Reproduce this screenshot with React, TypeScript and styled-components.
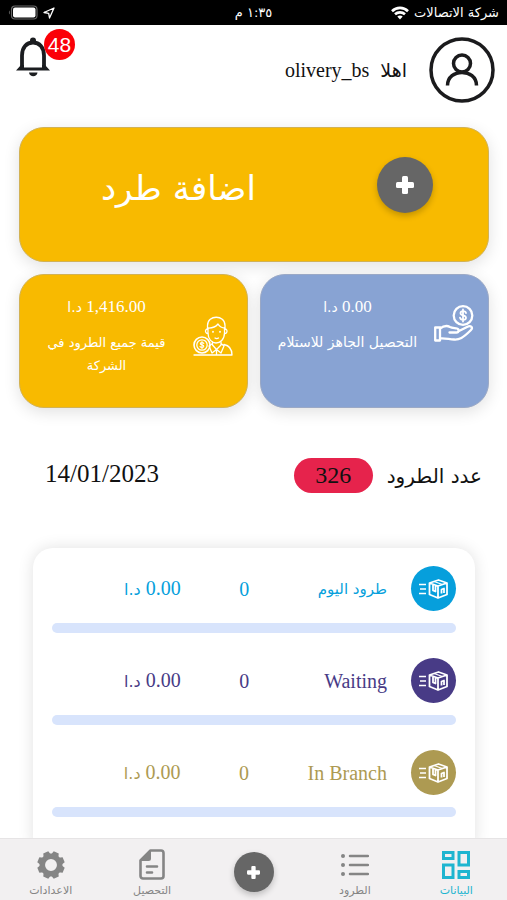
import React from "react";
import styled, { createGlobalStyle } from "styled-components";

const latin = `"Liberation Serif", "DejaVu Sans", serif`;
const arabic = `"DejaVu Sans", "Liberation Sans", sans-serif`;

const GlobalStyle = createGlobalStyle`
  *, *::before, *::after { box-sizing: border-box; }
  body { margin: 0; background: #fff; color: #111; font-family: ${latin}; }
  button { border: 0; padding: 0; background: none; color: inherit; font: inherit; cursor: pointer; }
  a { color: inherit; text-decoration: none; }
  h1, h2, p, ul { margin: 0; padding: 0; font-weight: 400; list-style: none; }
`;

const Screen = styled.div`
  display: flex;
  flex-direction: column;
  height: 100vh;
  overflow: hidden;
`;

const StatusBar = styled.div`
  display: grid;
  grid-template-columns: 1fr auto 1fr;
  align-items: center;
  flex: none;
  height: 25px;
  padding: 0 8px;
  background: #000;
  color: #fff;
  font: 13px/24px ${arabic};
`;

const StatusGroup = styled.div<{ $end?: boolean }>`
  display: flex;
  align-items: center;
  justify-content: ${(p) => (p.$end ? "flex-end" : "flex-start")};
  gap: 5px;
  white-space: nowrap;
`;

const Content = styled.main`
  flex: 1;
  min-height: 0;
  overflow-y: auto;
  scrollbar-width: none;
`;

const Header = styled.header`
  display: flex;
  align-items: flex-start;
  justify-content: space-between;
  height: 102px;
  padding: 12px 12px 0 16px;
`;

const Profile = styled.div`
  display: flex;
  align-items: center;
  gap: 22px;
`;

const Greeting = styled.p`
  display: flex;
  align-items: baseline;
  gap: 11px;
  font-size: 20px;
  line-height: 24px;
`;

const ArabicText = styled.span<{ $size: number }>`
  font-family: ${arabic};
  font-size: ${(p) => p.$size}px;
`;

const BellButton = styled.button`
  position: relative;
  width: 34px;
  height: 40px;
`;

const Badge = styled.span`
  position: absolute;
  top: -8px;
  left: 28px;
  width: 31px;
  height: 31px;
  border-radius: 50%;
  background: #fb0007;
  color: #fff;
  font: 21px/31px "Liberation Sans", sans-serif;
  text-align: center;
`;

const Panel = styled.section`
  border-radius: 25px;
  background: #f8ba00;
  color: #fff;
  border: 1px solid #d2b254;
  box-shadow: 0 4px 16px rgba(0, 0, 0, 0.12);
`;

const Hero = styled(Panel)`
  display: grid;
  grid-template-columns: 6fr 11fr;
  align-items: center;
  justify-items: center;
  height: 135px;
  margin: 0 18px 12px 19px;
  padding-bottom: 20px;
`;

const HeroTitle = styled.h1`
  padding: 6px 0 0 14px;
  font: 34px/48px ${arabic};
  white-space: nowrap;
`;

const RoundButton = styled.button<{ $size: number }>`
  display: grid;
  place-items: center;
  width: ${(p) => p.$size}px;
  height: ${(p) => p.$size}px;
  border-radius: 50%;
  background: #666;
  color: #fff;
  box-shadow: 0 3px 6px rgba(0, 0, 0, 0.22);
`;

const Cards = styled.div`
  display: grid;
  grid-template-columns: 1fr 1fr;
  gap: 12px;
  margin: 0 18px 0 19px;
`;

const Card = styled(Panel)<{ $blue?: boolean }>`
  height: 134px;
  padding: 20px 14px 0 0;
  ${(p) => p.$blue && "background: #88a3d3; border-color: #9ba9c6;"}
`;

const CardBody = styled.div`
  display: grid;
  grid-template-columns: 40px 1fr;
  align-items: center;
`;

const CardText = styled.div`
  display: flex;
  flex-direction: column;
  align-items: center;
  gap: 12px;
`;

const Amount = styled.p<{ $size: number }>`
  font-size: ${(p) => p.$size}px;
  line-height: 24px;
  white-space: nowrap;
`;

const CardLabel = styled.p<{ $size: number }>`
  max-width: 144px;
  font: ${(p) => p.$size}px/23px ${arabic};
  text-align: center;
`;

const Summary = styled.div`
  display: flex;
  align-items: center;
  gap: 14px;
  margin: 50px 25px 55px 45px;
`;

const SummaryTitle = styled.h2`
  font: 20px/32px ${arabic};
`;

const CountPill = styled.span`
  width: 79px;
  border-radius: 18px;
  background: #e6234c;
  font-size: 24px;
  line-height: 35px;
  text-align: center;
`;

const DateText = styled.time`
  margin-inline-start: auto;
  padding-bottom: 4px;
  font-size: 25px;
  line-height: 31px;
`;

const StatusList = styled.ul`
  display: flex;
  flex-direction: column;
  gap: 25px;
  margin: 0 32px 0 33px;
  padding: 18px 19px 40px;
  border-radius: 20px;
  background: #fff;
  box-shadow: 0 0 16px rgba(0, 0, 0, 0.12);
`;

const StatusItem = styled.li<{ $color: string }>`
  display: grid;
  grid-template-columns: 45px 8fr 8fr 13fr;
  align-items: center;
  column-gap: 24px;
  row-gap: 12px;
  color: ${(p) => p.$color};
  font-size: 20px;
  line-height: 24px;
  white-space: nowrap;
`;

const StatusIcon = styled.span<{ $color: string }>`
  display: grid;
  place-items: center;
  width: 45px;
  height: 45px;
  border-radius: 50%;
  background: ${(p) => p.$color};
  color: #fff;
`;

const StatusCount = styled.span`
  text-align: center;
`;

const Track = styled.div`
  grid-column: 1 / -1;
  height: 10px;
  border-radius: 5px;
  background: #d8e4fc;
`;

const TabBar = styled.nav`
  display: grid;
  grid-template-columns: repeat(5, 1fr);
  flex: none;
  height: 62px;
  border-top: 1px solid #e6e4e5;
  background: #f2f0f1;
`;

const Tab = styled.a<{ $active?: boolean }>`
  display: grid;
  grid-template-rows: 31px 16px;
  justify-items: center;
  align-items: center;
  align-content: start;
  gap: 3px;
  padding-top: 10px;
  color: ${(p) => (p.$active ? "#1fb5d0" : "#858585")};
  font: 11px/16px ${arabic};
`;

const TabAction = styled.div`
  display: flex;
  justify-content: center;
  padding-top: 13px;
`;

const PlusIcon = ({ size }: { size: number }) => (
  <svg width={size} height={size} viewBox="0 0 18 18" fill="currentColor" aria-hidden="true">
    <rect x="6" width="6" height="18" rx="1.5" />
    <rect y="6" width="18" height="6" rx="1.5" />
  </svg>
);

const WifiIcon = () => (
  <svg width="18" height="14" viewBox="0 0 18 14" fill="none" stroke="#fff" strokeWidth="2.6" aria-hidden="true">
    <path d="M1 5.2C5.5.8 12.500.8 17 5.200M4 8.300c2.800-2.600 7.200-2.600 10 0" />
    <path d="M6.300 10.600c1.500-1.400 3.900-1.400 5.400 0L9 13.500z" fill="#fff" stroke="none" />
  </svg>
);

const LocationIcon = () => (
  <svg width="12" height="12" viewBox="0 0 12 12" fill="none" stroke="#fff" strokeWidth="1.300" strokeLinejoin="round" aria-hidden="true">
    <path d="M11 1 1 5.500l4.700.8.800 4.700z" />
  </svg>
);

const BatteryIcon = () => (
  <svg width="30" height="15" viewBox="0 0 30 15" aria-hidden="true">
    <rect x="3.500" y="1" width="25.500" height="13" rx="3.500" fill="none" stroke="#686868" strokeWidth="1.200" />
    <rect x="5" y="2.500" width="22.500" height="10" rx="2" fill="#fff" />
    <path d="M1.800 5.500v4C.6 9 .6 6 1.800 5.500z" fill="#686868" />
  </svg>
);

const UserIcon = () => (
  <svg width="66" height="66" viewBox="0 0 66 66" fill="none" stroke="#1b1b1d" strokeWidth="3.500" aria-hidden="true">
    <circle cx="33" cy="33" r="31" />
    <circle cx="33" cy="26.500" r="8.500" />
    <path d="M18.500 48.500c0-17.500 29-17.500 29 0" strokeLinecap="butt" />
  </svg>
);

const BellIcon = () => (
  <svg width="34" height="40" viewBox="0 0 34 40" aria-hidden="true">
    <path d="M6 32V18.500C6 10.500 10.500 5.500 17 5.500S28 10.500 28 18.500V32" fill="none" stroke="#1b1d20" strokeWidth="3.800" />
    <circle cx="17" cy="3.500" r="3" fill="#1b1d20" />
    <path d="M0 33.500 5 28h3v2.500h18V28h3l5 5.500z" fill="#1b1d20" />
    <path d="M13 35.500h8.500c-.5 5-8 5-8.500 0z" fill="#1b1d20" />
  </svg>
);

const HandCoinIcon = () => (
  <svg width="40" height="40" viewBox="0 0 40 40" fill="none" stroke="#fff" strokeWidth="2.300" strokeLinejoin="round" strokeLinecap="round" aria-hidden="true">
    <circle cx="29" cy="10.500" r="9.300" />
    <path d="M32 8c-.5-2.500-5.500-2.500-5.500.3 0 2.700 5.500 1.500 5.500 4.400 0 2.800-5.500 2.800-6 0M29 4.500v12" strokeWidth="1.800" />
    <path d="M1.200 22.500H6v13H1.200zM6 23.500c4-3 7-3.200 10-1.500 2 1 5 1 7 1.500 2.500.8 2 4-.5 4h-7M24 26.500l9-4.500c4-2 6.500.5 4 3-8 8-12 10-17 9.500-5-.2-9-1.500-14-1" />
  </svg>
);

const CourierIcon = () => (
  <svg width="40" height="40" viewBox="0 0 40 40" fill="none" stroke="#fff" strokeWidth="1.300" strokeLinejoin="round" strokeLinecap="round" aria-hidden="true">
    <path d="M14.500 13V9.500C14.500-1.500 32-1.500 32 9.500V13M14.500 12c4.500.3 8.500-1.500 10.500-4 1.500 2.500 4 4 7 4" />
    <path d="M15 12v5c0 6.500 4 10 8 10s8.500-3.500 8.500-10v-5M14.500 13c-3 0-2.500 5 .7 4.500M32 13c3 0 2.500 5-.5 4.500M22 22c1 .7 2.500.7 3.500 0" />
    <path d="M20 15.500v.5M27 15.500v.5" strokeWidth="1.700" />
    <path d="M19.500 26v3l4 4.500 4.500-4.500v-3M19.500 27.500 16 30l3 7 4.500-3.500L28 37l3-7-3-2.500M31 28.500c5 1 8 3.500 8 10.500H1M23.500 34v4.500" />
    <circle cx="9" cy="29" r="8" strokeWidth="1.600" />
    <circle cx="9" cy="29" r="5.200" />
    <path d="M10.800 27.500c-.8-1.500-3.500-1-3.500.2s3.500 1 3.500 2.500c0 1.600-3 1.600-3.800.2M9 25.500v7" strokeWidth="1.100" />
  </svg>
);

const ParcelIcon = () => (
  <svg width="29" height="20" viewBox="0 0 29 20" fill="none" stroke="currentColor" strokeWidth="1.800" strokeLinejoin="round" aria-hidden="true">
    <path d="M0 5.500h7M1 10h6M0 14.500h7" strokeWidth="1.600" />
    <path d="m10.500 4 9-3 8.500 3v11.500L19 19l-8.500-3.500zM10.500 4l8.500 3 9-3M19 7v12M14 5.500v6l2.500 1v-6M22.500 14.500v-4l2.500-1v4.500" />
    <path d="m15 2.500 8.500 3" strokeWidth="1.200" />
  </svg>
);

const DashboardIcon = () => (
  <svg width="28" height="28" viewBox="0 0 28 28" fill="none" stroke="currentColor" strokeWidth="3" aria-hidden="true">
    <path d="M1.500 1.500h9.500v6H1.500zM1.500 14H11v12.500H1.500zM17 1.500h9.500V14H17zM17 20.500h9.500v6H17z" />
  </svg>
);

const ListIcon = () => (
  <svg width="28" height="28" viewBox="0 0 28 28" fill="currentColor" aria-hidden="true">
    <circle cx="2" cy="5" r="2" />
    <circle cx="2" cy="14" r="2" />
    <circle cx="2" cy="23" r="2" />
    <path d="M9 5h18M9 14h18M9 23h18" stroke="currentColor" strokeWidth="2.500" strokeLinecap="round" />
  </svg>
);

const DocumentIcon = () => (
  <svg width="26" height="31" viewBox="0 0 26 31" aria-hidden="true">
    <path d="M11.500 1.500H22A2.500 2.500 0 0 1 24.500 4v23a2.500 2.500 0 0 1-2.500 2.500H4A2.500 2.500 0 0 1 1.500 27V11.500z" fill="none" stroke="currentColor" strokeWidth="2.600" strokeLinejoin="round" />
    <path d="M1 12 12 1v8.500a2.500 2.500 0 0 1-2.500 2.500z" fill="currentColor" />
    <path d="M8 17.500h10M8 23.500h5" stroke="currentColor" strokeWidth="2.600" strokeLinecap="round" />
  </svg>
);

const GearIcon = () => (
  <svg width="28" height="28" viewBox="0 0 28 28" aria-hidden="true">
    <circle cx="14" cy="14" r="8.700" fill="none" stroke="currentColor" strokeWidth="5.500" />
    {[22.5, 67.5, 112.5, 157.5, 202.5, 247.5, 292.5, 337.5].map((angle) => (
      <path key={angle} d="M10 4.500 11.300.3h5.400L18 4.500z" fill="currentColor" transform={`rotate(${angle} 14 14)`} />
    ))}
  </svg>
);

const Money = ({ value, size, arabicSize }: { value: string; size: number; arabicSize: number }) => (
  <Amount $size={size}>
    {value} <ArabicText $size={arabicSize}>د.ا</ArabicText>
  </Amount>
);

const statuses = [
  { label: "طرود اليوم", color: "#069fdc", isArabic: true },
  { label: "Waiting", color: "#483b86", isArabic: false },
  { label: "In Branch", color: "#ad9a52", isArabic: false },
];

export default function App() {
  return (
    <Screen dir="rtl" lang="ar">
      <GlobalStyle />
      <StatusBar>
        <StatusGroup>
          <span>شركة الاتصالات</span>
          <WifiIcon />
        </StatusGroup>
        <span>١:٣٥ م</span>
        <StatusGroup $end>
          <LocationIcon />
          <BatteryIcon />
        </StatusGroup>
      </StatusBar>

      <Content>
        <Header>
          <Profile>
            <UserIcon />
            <Greeting>
              <ArabicText $size={19}>اهلا</ArabicText>
              <bdi>olivery_bs</bdi>
            </Greeting>
          </Profile>
          <BellButton aria-label="الإشعارات">
            <BellIcon />
            <Badge>48</Badge>
          </BellButton>
        </Header>

        <Hero>
          <RoundButton $size={56} aria-label="اضافة طرد">
            <PlusIcon size={18} />
          </RoundButton>
          <HeroTitle>اضافة طرد</HeroTitle>
        </Hero>

        <Cards>
          <Card $blue>
            <CardBody>
              <HandCoinIcon />
              <CardText>
                <Money value="0.00" size={17} arabicSize={14} />
                <CardLabel $size={14}>التحصيل الجاهز للاستلام</CardLabel>
              </CardText>
            </CardBody>
          </Card>
          <Card>
            <CardBody>
              <CourierIcon />
              <CardText>
                <Money value="1,416.00" size={17} arabicSize={14} />
                <CardLabel $size={13}>قيمة جميع الطرود في الشركة</CardLabel>
              </CardText>
            </CardBody>
          </Card>
        </Cards>

        <Summary>
          <SummaryTitle>عدد الطرود</SummaryTitle>
          <CountPill>326</CountPill>
          <DateText dateTime="2023-01-14">
            <bdi>14/01/2023</bdi>
          </DateText>
        </Summary>

        <StatusList>
          {statuses.map((s) => (
            <StatusItem key={s.label} $color={s.color}>
              <StatusIcon $color={s.color}>
                <ParcelIcon />
              </StatusIcon>
              {s.isArabic ? <ArabicText $size={15}>{s.label}</ArabicText> : <span>{s.label}</span>}
              <StatusCount>0</StatusCount>
              <Money value="0.00" size={20} arabicSize={16} />
              <Track />
            </StatusItem>
          ))}
        </StatusList>
      </Content>

      <TabBar>
        <Tab href="#dashboard" $active aria-current="page">
          <DashboardIcon />
          البيانات
        </Tab>
        <Tab href="#parcels">
          <ListIcon />
          الطرود
        </Tab>
        <TabAction>
          <RoundButton $size={40} aria-label="اضافة">
            <PlusIcon size={13} />
          </RoundButton>
        </TabAction>
        <Tab href="#collection">
          <DocumentIcon />
          التحصيل
        </Tab>
        <Tab href="#settings">
          <GearIcon />
          الاعدادات
        </Tab>
      </TabBar>
    </Screen>
  );
}
